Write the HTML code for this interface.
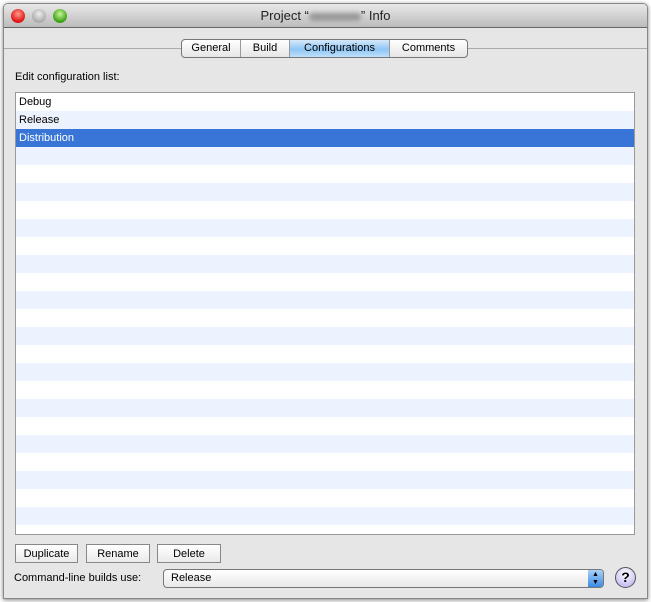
<!DOCTYPE html><html><head><style>
*{margin:0;padding:0;box-sizing:border-box}
body{width:651px;height:602px;background:#fff;font-family:"Liberation Sans",sans-serif;font-size:11px;color:#000;position:relative;overflow:hidden}
.win{position:absolute;left:3px;top:3px;width:645px;height:596px;background:#e6e6e6;border:1px solid #888;border-radius:5px 5px 0 0;box-shadow:0 1px 4px rgba(0,0,0,.5);overflow:hidden}
.title{position:absolute;left:0;top:0;width:100%;height:24px;background:linear-gradient(#e8e8e8,#bcbcbc);border-bottom:1px solid #666;text-align:center;font-size:13px;line-height:24px;color:#222}
.blur{display:inline-block;width:52px;height:8px;background:#999;border-radius:4px;filter:blur(2px);vertical-align:middle}
.light{position:absolute;top:5px;width:14px;height:14px;border-radius:50%}
.sep{position:absolute;left:0;top:44px;width:100%;height:1px;background:#aaa}
.tabs{position:absolute;left:177px;top:35px;height:19px;display:flex;border:1px solid #777;border-radius:4px;background:linear-gradient(#fff,#e6e6e6);overflow:hidden}
.tabs div{line-height:17px;border-right:1px solid #999;font-size:11px;text-align:center}
.tabs div:last-child{border:none}
.tabs .sel{background:linear-gradient(#d6e9fb,#8fc6f5 55%,#bfe0fb)}
.lbl{position:absolute;left:11px;top:67px}
.list{position:absolute;left:11px;top:88px;width:620px;height:443px;border:1px solid #999;background:repeating-linear-gradient(#fff 0 18px,#edf3fe 18px 36px)}
.row{height:18px;line-height:18px;padding-left:3px}
.row.s{background:#3875d7;color:#fff}
.btn{position:absolute;top:540px;height:19px;border:1px solid #888;background:linear-gradient(#fff,#eaeaea);text-align:center;line-height:18px}
.pop{position:absolute;left:159px;top:565px;width:441px;height:19px;border:1px solid #777;border-radius:4px;background:linear-gradient(#fff,#e8e8e8);line-height:17px;padding-left:7px}
.arr{position:absolute;right:0;top:0;width:15px;height:17px;background:linear-gradient(#a9d0f8,#3b8be4);border-radius:0 3px 3px 0;color:#000;font-size:7px;line-height:8px;text-align:center;padding-top:1px}
.help{position:absolute;left:611px;top:563px;width:21px;height:21px;border-radius:50%;border:1px solid #555;background:radial-gradient(circle at 50% 30%,#fff,#b7a8f0);text-align:center;font-weight:bold;font-size:14px;line-height:19px}
</style></head><body>
<div class="win">
<div class="title">Project “<span class="blur"></span>” Info
<div class="light" style="left:7px;background:radial-gradient(circle at 50% 35%,#ff9a8a,#d11 70%)"></div>
<div class="light" style="left:28px;background:radial-gradient(circle at 50% 35%,#eee,#aaa 70%)"></div>
<div class="light" style="left:49px;background:radial-gradient(circle at 50% 35%,#c9f59a,#3a9e12 70%)"></div>
</div>
<div class="sep"></div>
<div class="tabs"><div style="width:59px">General</div><div style="width:49px">Build</div><div class="sel" style="width:100px">Configurations</div><div style="width:77px">Comments</div></div>
<div class="lbl">Edit configuration list:</div>
<div class="list"><div class="row">Debug</div><div class="row">Release</div><div class="row s">Distribution</div></div>
<div class="btn" style="left:11px;width:63px">Duplicate</div>
<div class="btn" style="left:82px;width:64px">Rename</div>
<div class="btn" style="left:153px;width:64px">Delete</div>
<div style="position:absolute;left:10px;top:568px">Command-line builds use:</div>
<div class="pop">Release<div class="arr">▲<br>▼</div></div>
<div class="help">?</div>
</div>
</body></html>
